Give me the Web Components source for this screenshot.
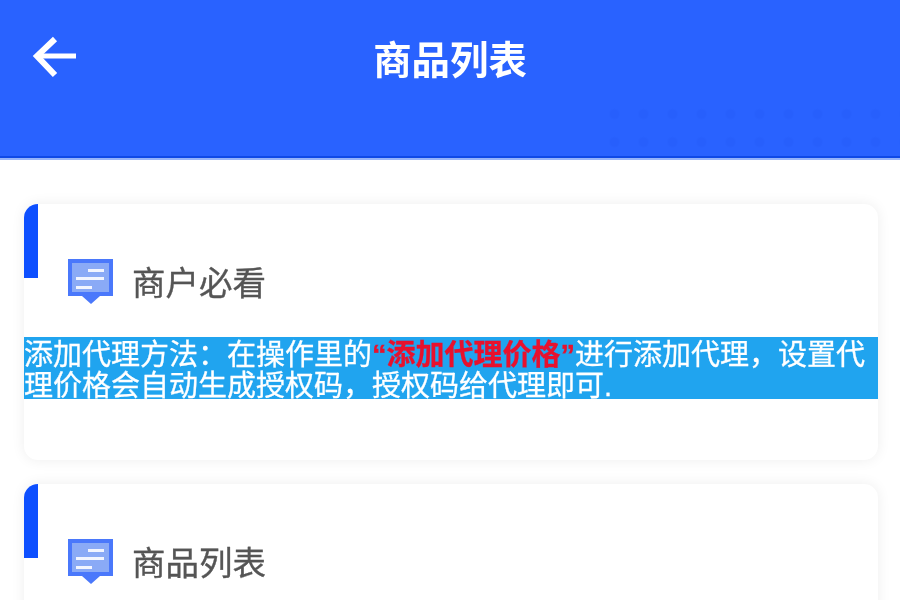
<!DOCTYPE html>
<html lang="zh-CN">
<head>
<meta charset="utf-8">
<title>商品列表</title>
<style>
    html, body {
        margin: 0;
        height: 600px;
        overflow: hidden;
        background: #fff;
        font-family: "Noto Sans CJK SC", "Liberation Sans", sans-serif;
    }
    body {
        filter: blur(0.55px);
    }
    .page-body {
        display: flex;
        flex-direction: column;
        gap: 24px;
        padding: 44px 22px 0 24px;
    }
</style>
</head>
<body>

<app-header title-text="商品列表"></app-header>

<div class="page-body">
    <info-card heading="商户必看">
        <notice-text>添加代理方法：在操作里的<b>“添加代理价格”</b>进行添加代理，设置代理价格会自动生成授权码，授权码给代理即可.</notice-text>
    </info-card>
    <info-card heading="商品列表"></info-card>
</div>

<script>
const headerTemplate = document.createElement ("template");
headerTemplate.innerHTML = `
<style>
    :host {
        display: block;
        position: relative;
        height: 160px;
        box-sizing: border-box;
        background: #2962ff;
        border-bottom: 2px solid #97b4fa;
        box-shadow: inset 0 -2px 0 #0f49e6;
    }

    #bar {
        display: grid;
        grid-template-columns: 1fr auto 1fr;
        align-items: center;
        height: 113px;
        padding: 0 32px;
        box-sizing: border-box;
    }

    #title {
        color: #fff;
        font-size: 38.4px;
        font-weight: 700;
        line-height: 44px;
    }

    svg {
        display: block;
    }

    /* faint dots on the right of the banner */
    #dots {
        position: absolute;
        left: 600px;
        right: 0;
        top: 100px;
        height: 56px;
        background-image: radial-gradient(circle, #2259f5 0, #2259f5 4px, transparent 6px);
        background-size: 29px 28px;
        opacity: .3;
    }
</style>
<div id="dots"></div>
<div id="bar">
    <svg width="46" height="44" viewBox="0 0 46 44" fill="none" stroke="#fff">
        <path d="M5 21 H44" stroke-width="5"/>
        <path d="M23 4 L5 21 L23 40" stroke-width="6"/>
    </svg>
    <div id="title"></div>
</div>
`

class AppHeader extends HTMLElement {

    constructor () {
        super ();
        this.attachShadow ({mode: "open"});
    }

    connectedCallback () {
        this.shadowRoot.appendChild (headerTemplate.content.cloneNode (true));
        this.shadowRoot.querySelector ("#title").textContent = this.getAttribute ("title-text");
    }
}

const cardTemplate = document.createElement ("template");
cardTemplate.innerHTML = `
<style>
    :host {
        display: block;
        position: relative;
        min-height: 256px;
        padding-top: 55px;
        box-sizing: border-box;
        background: #fff;
        border-radius: 14px;
        box-shadow: 0 0 14px rgba(0, 0, 0, .07);
    }

    #accent {
        position: absolute;
        left: 0;
        top: 0;
        width: 14px;
        height: 74px;
        background: #0d4fff;
        border-top-left-radius: 14px;
    }

    #head {
        display: flex;
        align-items: center;
        gap: 19px;
        height: 44px;
        padding-left: 44px;
        margin-bottom: 34px;
    }

    #label {
        color: #555;
        font-size: 33.5px;
        line-height: 44px;
        -webkit-text-stroke: .35px #555;
    }

    svg {
        display: block;
        flex: none;
    }
</style>
<div id="accent"></div>
<div id="head">
    <svg width="45" height="45" viewBox="0 0 45 45">
        <path d="M0 0 H45 V37 H32 L23 45 L14 37 H0 Z" fill="#4a78fb"/>
        <rect x="4" y="4" width="37" height="29" fill="#8aaaf6"/>
        <rect x="20" y="10" width="16" height="3" fill="#f2f5ff"/>
        <rect x="8" y="18" width="28" height="3" fill="#f2f5ff"/>
        <rect x="8" y="27" width="16" height="3" fill="#f2f5ff"/>
    </svg>
    <div id="label"></div>
</div>
<slot></slot>
`

class InfoCard extends HTMLElement {

    constructor () {
        super ();
        this.attachShadow ({mode: "open"});
    }

    connectedCallback () {
        this.shadowRoot.appendChild (cardTemplate.content.cloneNode (true));
        this.shadowRoot.querySelector ("#label").textContent = this.getAttribute ("heading");
    }
}

const noticeTemplate = document.createElement ("template");
noticeTemplate.innerHTML = `
<style>
    :host {
        display: block;
        box-sizing: border-box;
        height: 62px;
        padding-top: 3px;
        background: #20a4ef;
        color: #fff;
        font-family: "Liberation Sans", "Noto Sans CJK SC", sans-serif;
        font-size: 29px;
        line-height: 31px;
        -webkit-text-stroke: .3px #fff;
    }

    ::slotted(b) {
        color: #e8112d;
        font-weight: 700;
        -webkit-text-stroke: .3px #e8112d;
    }
</style>
<slot></slot>
`

class NoticeText extends HTMLElement {

    constructor () {
        super ();
        this.attachShadow ({mode: "open"});
        this.shadowRoot.appendChild (noticeTemplate.content.cloneNode (true));
    }
}

customElements.define ("app-header", AppHeader);
customElements.define ("info-card", InfoCard);
customElements.define ("notice-text", NoticeText);
</script>
</body>
</html>
